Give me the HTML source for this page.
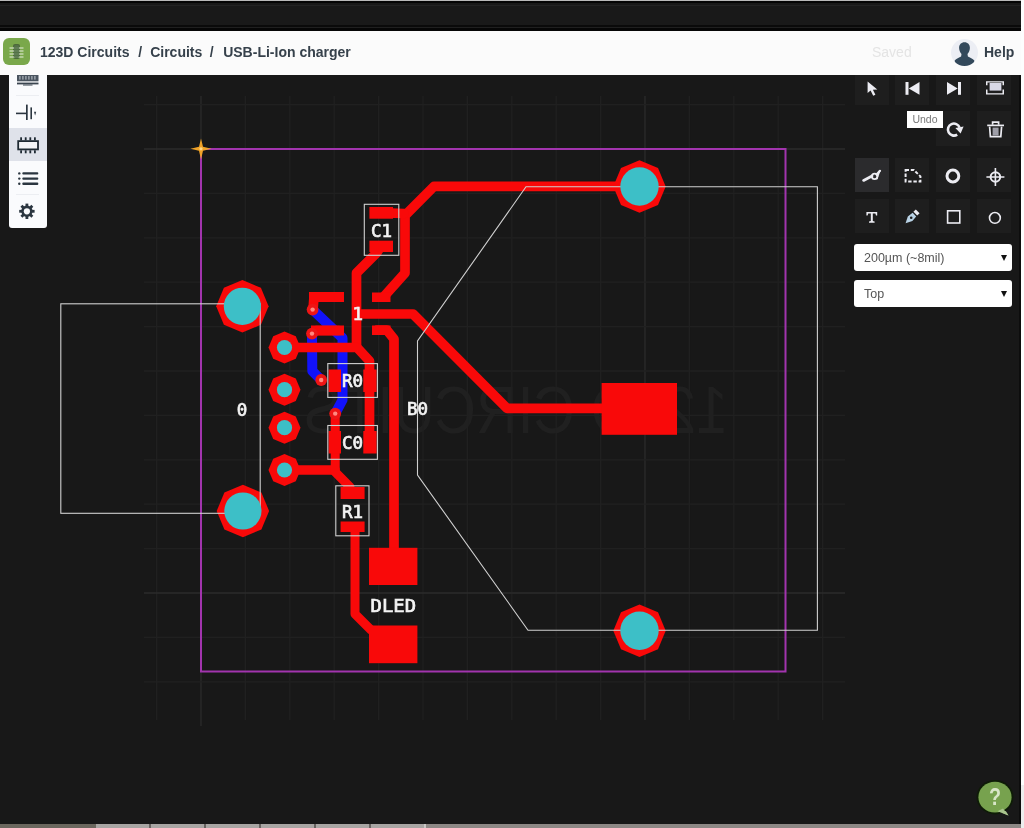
<!DOCTYPE html>
<html lang="en">
<head>
<meta charset="utf-8">
<title>123D Circuits - USB-Li-Ion charger</title>
<style>
html,body{margin:0;padding:0;}
body{width:1024px;height:828px;overflow:hidden;background:#181818;position:relative;font-family:"Liberation Sans",sans-serif;}
#stage{position:absolute;left:0;top:0;width:1024px;height:828px;overflow:hidden;background:#181818;}
#header,#tooltip,.sel2,svg{will-change:transform;}
#topline{position:absolute;left:0;top:0;width:1021px;height:1px;background:#b9b9b9;}
#topbar{position:absolute;left:0;top:1px;width:1021px;height:30px;background:#191919;}
#topbar i{position:absolute;left:0;width:100%;display:block;}
#rightstrip{position:absolute;left:1021px;top:0;width:3px;height:828px;background:#fdfdfd;}
#rightstrip i{position:absolute;left:0;top:785px;width:3px;height:43px;background:#ededed;display:block;}
#rightedge{position:absolute;left:1019px;top:75px;width:2px;height:749px;background:#0d0d0d;}
#bottomstrip{position:absolute;left:0;top:824px;width:1021px;height:4px;background:#8d8885;}
#bottomstrip i{position:absolute;top:0;height:4px;display:block;}
#header{position:absolute;left:0;top:31px;width:1021px;height:44px;background:#fbfbfb;}
#logo{position:absolute;left:3px;top:7px;width:27px;height:27px;border-radius:6px;background:#7aa84b;}
#crumbs{position:absolute;left:40px;top:13px;font-size:14px;font-weight:bold;color:#36414b;white-space:nowrap;line-height:17px;}
#crumbs span.a{margin:0 8px 0 8.8px;}#crumbs span.b{margin:0 9.6px 0 7.4px;}
#saved{position:absolute;left:872px;top:13px;font-size:14px;color:#e4e4e4;line-height:17px;}
#avatar{position:absolute;left:951px;top:8px;width:27px;height:27px;border-radius:50%;background:#eceef4;overflow:hidden;}
#help{position:absolute;left:984px;top:13px;font-size:14px;font-weight:bold;color:#36414b;line-height:17px;}
#leftpanel{position:absolute;left:9px;top:70px;width:38px;height:158px;background:#fafbfd;border-radius:0 0 3px 3px;}
#leftpanel .sel{position:absolute;left:0;top:58px;width:38px;height:33px;background:#dfe2ea;}
.tb{position:absolute;width:34px;height:34px;background:#1e1e1e;}
.tb.on{background:#2b2b2d;}
#tooltip{position:absolute;left:907px;top:111px;width:36px;height:17px;background:#fff;color:#777;font-size:10.5px;line-height:17px;text-align:center;}
.sel2{position:absolute;left:854px;width:158px;height:27px;background:#fff;border-radius:3px;color:#555;font-size:12.5px;line-height:28.5px;text-indent:10px;}
.sel2 b{position:absolute;right:5px;top:11px;width:0;height:0;border-left:3.5px solid transparent;border-right:3.5px solid transparent;border-top:6px solid #111;}
svg{position:absolute;left:0;top:0;}
</style>
</head>
<body>
<div id="stage">
<svg width="1024" height="828" viewBox="0 0 1024 828">
<g transform="translate(728,433) scale(-1,1)"><text x="0" y="0" font-family="Liberation Sans,sans-serif" font-size="66" font-weight="normal" fill="#202020" textLength="424" lengthAdjust="spacingAndGlyphs">123D CIRCUITS</text></g>
<g stroke-width="1.3" shape-rendering="auto"><line x1="156.6" y1="96" x2="156.6" y2="720" stroke="#202020"/><line x1="201.0" y1="96" x2="201.0" y2="726" stroke="#2b2b2b"/><line x1="245.4" y1="96" x2="245.4" y2="720" stroke="#202020"/><line x1="289.8" y1="96" x2="289.8" y2="720" stroke="#202020"/><line x1="334.2" y1="96" x2="334.2" y2="720" stroke="#202020"/><line x1="378.6" y1="96" x2="378.6" y2="720" stroke="#202020"/><line x1="423.0" y1="96" x2="423.0" y2="720" stroke="#202020"/><line x1="467.4" y1="96" x2="467.4" y2="720" stroke="#202020"/><line x1="511.8" y1="96" x2="511.8" y2="720" stroke="#202020"/><line x1="556.2" y1="96" x2="556.2" y2="720" stroke="#202020"/><line x1="600.6" y1="96" x2="600.6" y2="720" stroke="#202020"/><line x1="645.0" y1="96" x2="645.0" y2="720" stroke="#2b2b2b"/><line x1="689.4" y1="96" x2="689.4" y2="720" stroke="#202020"/><line x1="733.8" y1="96" x2="733.8" y2="720" stroke="#202020"/><line x1="778.2" y1="96" x2="778.2" y2="720" stroke="#202020"/><line x1="822.6" y1="96" x2="822.6" y2="720" stroke="#202020"/><line x1="144" y1="104.6" x2="845" y2="104.6" stroke="#202020"/><line x1="144" y1="149.0" x2="845" y2="149.0" stroke="#2b2b2b"/><line x1="144" y1="193.4" x2="845" y2="193.4" stroke="#202020"/><line x1="144" y1="237.8" x2="845" y2="237.8" stroke="#202020"/><line x1="144" y1="282.2" x2="845" y2="282.2" stroke="#202020"/><line x1="144" y1="326.6" x2="845" y2="326.6" stroke="#202020"/><line x1="144" y1="371.0" x2="845" y2="371.0" stroke="#202020"/><line x1="144" y1="415.4" x2="845" y2="415.4" stroke="#202020"/><line x1="144" y1="459.8" x2="845" y2="459.8" stroke="#202020"/><line x1="144" y1="504.2" x2="845" y2="504.2" stroke="#202020"/><line x1="144" y1="548.6" x2="845" y2="548.6" stroke="#202020"/><line x1="144" y1="593.0" x2="845" y2="593.0" stroke="#2b2b2b"/><line x1="144" y1="637.4" x2="845" y2="637.4" stroke="#202020"/><line x1="144" y1="681.8" x2="845" y2="681.8" stroke="#202020"/></g>
<rect x="201" y="149" width="584.5" height="522.5" fill="none" stroke="#a234ae" stroke-width="2"/>
<g fill="none" stroke="#1212fb" stroke-width="10" stroke-linecap="round" stroke-linejoin="round">
<path d="M312.6 309.6 L342.5 338 L342.5 400 L335.2 413.6"/>
<path d="M312 333.6 L312.3 371 L321.2 380"/>
</g>
<g fill="none" stroke="#f90909" stroke-width="9.7" stroke-linecap="round" stroke-linejoin="round">
<path d="M639.5 186.3 L434 186.3 L405 215.5 L405 273 L384 296.5"/>
<path d="M385 212.8 L404 213.5"/>
<path d="M381 246 L377 252.5 L356.5 273 L356.5 347.5"/>
<path d="M284.5 347.5 L357 347.5 L369.5 361 L369.5 448"/>
<path d="M358 314 L413 314 L507 408.4 L605 408.4"/>
<path d="M377 330.2 L387 330.2 L394 339 L394 552"/>
<path d="M339 297 L314 297 L313 309.6"/>
<path d="M339 330.5 L316 330.5 L312 333.6"/>
<path d="M284.5 470 L335 470"/>
<path d="M335.2 413.6 L335.2 472 L350 487" stroke-width="9"/>
<path d="M355 530 L355 614 L371 630" stroke-width="9"/>
</g>
<g fill="#f90909">
<rect x="309.0" y="292.0" width="35.0" height="10.0"/>
<rect x="311.0" y="325.5" width="33.0" height="10.0"/>
<rect x="372.0" y="292.5" width="18.5" height="9.5"/>
<rect x="372.0" y="325.5" width="18.5" height="9.5"/>
<rect x="369.4" y="207.0" width="23.6" height="11.7"/>
<rect x="369.4" y="240.7" width="23.6" height="11.3"/>
<rect x="328.6" y="369.5" width="12.4" height="22.5"/>
<rect x="363.3" y="369.5" width="13.3" height="22.5"/>
<rect x="328.6" y="431.0" width="12.4" height="22.5"/>
<rect x="363.3" y="431.0" width="13.3" height="22.5"/>
<rect x="340.6" y="487.0" width="24.0" height="12.0"/>
<rect x="340.6" y="521.5" width="24.0" height="10.5"/>
<rect x="369.0" y="547.8" width="48.4" height="37.2"/>
<rect x="369.0" y="625.5" width="48.4" height="37.7"/>
<rect x="601.6" y="383.0" width="75.4" height="51.8"/>
<polygon points="242.4,280.1 260.9,287.8 268.6,306.3 260.9,324.8 242.4,332.5 223.9,324.8 216.2,306.3 223.9,287.8"/>
<polygon points="242.9,484.8 261.4,492.5 269.1,511.0 261.4,529.5 242.9,537.2 224.4,529.5 216.7,511.0 224.4,492.5"/>
<polygon points="639.5,160.3 658.0,168.0 665.7,186.5 658.0,205.0 639.5,212.7 621.0,205.0 613.3,186.5 621.0,168.0"/>
<polygon points="639.5,604.5 658.0,612.2 665.7,630.7 658.0,649.2 639.5,656.9 621.0,649.2 613.3,630.7 621.0,612.2"/>
<polygon points="284.5,331.5 295.8,336.2 300.5,347.5 295.8,358.8 284.5,363.5 273.2,358.8 268.5,347.5 273.2,336.2"/>
<polygon points="284.5,373.7 295.8,378.4 300.5,389.7 295.8,401.0 284.5,405.7 273.2,401.0 268.5,389.7 273.2,378.4"/>
<polygon points="284.5,411.7 295.8,416.4 300.5,427.7 295.8,439.0 284.5,443.7 273.2,439.0 268.5,427.7 273.2,416.4"/>
<polygon points="284.5,454.0 295.8,458.7 300.5,470.0 295.8,481.3 284.5,486.0 273.2,481.3 268.5,470.0 273.2,458.7"/>
</g>
<circle cx="312.6" cy="309.6" r="5.9" fill="#ee1515"/><circle cx="312.6" cy="309.6" r="2.2" fill="#ff8a80"/>
<circle cx="312.0" cy="333.6" r="5.9" fill="#ee1515"/><circle cx="312.0" cy="333.6" r="2.2" fill="#ff8a80"/>
<circle cx="321.2" cy="380.0" r="5.9" fill="#ee1515"/><circle cx="321.2" cy="380.0" r="2.2" fill="#ff8a80"/>
<circle cx="335.2" cy="413.6" r="5.9" fill="#ee1515"/><circle cx="335.2" cy="413.6" r="2.2" fill="#ff8a80"/>
<g fill="none" stroke="#d0d0d0" stroke-width="1.1">
<rect x="60.8" y="303.8" width="199.4" height="209.5"/>
<path d="M526 186.8 L417.5 341 L417.5 475 L528 630.2 L817.4 630.2 L817.4 186.8 Z"/>
<rect x="364.3" y="204.3" width="34.5" height="51"/>
<rect x="327.8" y="363.6" width="49.6" height="33.8"/>
<rect x="327.8" y="425.5" width="49.6" height="33.8"/>
<rect x="335.8" y="485.8" width="33.2" height="50"/>
</g>
<circle cx="242.4" cy="306.3" r="18.6" fill="#3dbfc7"/>
<circle cx="242.9" cy="511.0" r="18.6" fill="#3dbfc7"/>
<circle cx="639.5" cy="186.5" r="19.2" fill="#3dbfc7"/>
<circle cx="639.5" cy="630.7" r="19.2" fill="#3dbfc7"/>
<circle cx="284.5" cy="347.5" r="7.6" fill="#3dbfc7"/>
<circle cx="284.5" cy="389.7" r="7.6" fill="#3dbfc7"/>
<circle cx="284.5" cy="427.7" r="7.6" fill="#3dbfc7"/>
<circle cx="284.5" cy="470.0" r="7.6" fill="#3dbfc7"/>
<g font-family="DejaVu Sans Mono,Liberation Mono,monospace" font-weight="normal" font-size="17.5" fill="#f4f4f4" stroke="#f4f4f4" stroke-width="0.7" text-anchor="middle">
<text x="381.5" y="237.0">C1</text>
<text x="352.5" y="387.0">R0</text>
<text x="352.5" y="449.0">C0</text>
<text x="352.5" y="517.5">R1</text>
<text x="417.5" y="415.0">B0</text>
<text x="242.0" y="415.5">0</text>
<text x="393.3" y="612.0" textLength="45.5" lengthAdjust="spacingAndGlyphs">DLED</text>
<text x="357.7" y="320.0">1</text>
</g>
<path d="M201 138.5 L203 146.8 L211.5 148.8 L203 150.8 L201 159.5 L199 150.8 L190.5 148.8 L199 146.8 Z" fill="#f0a328"/><circle cx="201" cy="148.8" r="1.6" fill="#ffd98a"/>
</svg>
<div id="topbar"><i style="top:0;height:2px;background:#050505"></i><i style="top:4px;height:1px;background:#232323"></i><i style="top:24px;height:2px;background:#0a0a0a"></i><i style="top:26px;height:1px;background:#1f1f1f"></i><i style="top:27px;height:3px;background:#060606"></i></div>
<div id="topline"></div>
<div id="rightstrip"><i></i></div><div id="rightedge"></div>
<div id="bottomstrip"><i style="left:0;width:96px;background:#6b675e"></i><i style="left:96px;width:329px;background:#a8a5a3"></i><i style="left:149px;width:2px;background:#66625f"></i><i style="left:204px;width:2px;background:#66625f"></i><i style="left:259px;width:2px;background:#66625f"></i><i style="left:314px;width:2px;background:#66625f"></i><i style="left:369px;width:2px;background:#66625f"></i><i style="left:424px;width:2px;background:#c9c7c5"></i></div>

<div id="leftpanel">
<div class="sel"></div>
<svg width="38" height="158" viewBox="9 70 38 158">
<g fill="#2b3640" stroke="none">
<g fill="#eceef2"><rect x="16" y="95" width="23" height="1"/><rect x="16" y="194" width="23" height="1"/></g>
<!-- breadboard -->
<rect x="17" y="75" width="21.5" height="6.3" fill="#4a545f"/><g fill="#aeb5bd"><rect x="19.3" y="76" width="1.2" height="3.6"/><rect x="22.3" y="76" width="1.2" height="3.6"/><rect x="25.3" y="76" width="1.2" height="3.6"/><rect x="28.3" y="76" width="1.2" height="3.6"/><rect x="31.3" y="76" width="1.2" height="3.6"/><rect x="34.3" y="76" width="1.2" height="3.6"/></g>
<rect x="17" y="82.6" width="21.5" height="1.8" fill="#3a454f"/>
<rect x="23" y="84.4" width="9.5" height="1.2" fill="#59636d"/>
<!-- battery -->
<rect x="16" y="112.6" width="10" height="1.6"/>
<rect x="26" y="104.6" width="1.7" height="15.4"/>
<rect x="30.4" y="107.4" width="1.6" height="11.8"/>
<path d="M34 111.8 L36.2 111.8 L35.1 115.6 Z"/>
<!-- chip -->
<rect x="18.2" y="141.1" width="19.8" height="8.3" fill="#f4f5f8" stroke="#1f2a33" stroke-width="1.8"/>
<g fill="#1f2a33"><rect x="20.2" y="137.3" width="1.8" height="3"/><rect x="24.8" y="137.3" width="1.8" height="3"/><rect x="29.4" y="137.3" width="1.8" height="3"/><rect x="34" y="137.3" width="1.8" height="3"/>
<rect x="20.2" y="150.3" width="1.8" height="3"/><rect x="24.8" y="150.3" width="1.8" height="3"/><rect x="29.4" y="150.3" width="1.8" height="3"/><rect x="34" y="150.3" width="1.8" height="3"/></g>
<!-- list -->
<rect x="22.3" y="172.2" width="16" height="2.4" rx="1"/><rect x="22.3" y="177.4" width="16" height="2.4" rx="1"/><rect x="22.3" y="182.5" width="16" height="2.4" rx="1"/>
<circle cx="19.3" cy="173.4" r="1.2"/><circle cx="19.3" cy="178.6" r="1.2"/><circle cx="19.3" cy="183.7" r="1.2"/>
</g>
<!-- gear -->
<g transform="translate(26.9 211.3)" fill="#2b3640">
<circle r="4.4" fill="none" stroke="#2b3640" stroke-width="2.6"/>
<g><rect x="-1.4" y="-7.7" width="2.8" height="15.4"/><rect x="-1.4" y="-7.7" width="2.8" height="15.4" transform="rotate(45)"/><rect x="-1.4" y="-7.7" width="2.8" height="15.4" transform="rotate(90)"/><rect x="-1.4" y="-7.7" width="2.8" height="15.4" transform="rotate(135)"/></g>
<circle r="3.1" fill="#fafbfd"/>
</g>
</svg>
</div>

<div id="header">
<div id="logo"><svg width="27" height="27" viewBox="0 0 27 27"><rect x="10" y="6" width="7" height="15" rx="2" fill="#4d6a3a"/><g stroke="#dfe9d3" stroke-width="1.1"><line x1="6.5" y1="10" x2="20.5" y2="10"/><line x1="6.5" y1="13" x2="20.5" y2="13"/><line x1="6.5" y1="16" x2="20.5" y2="16"/><line x1="6.5" y1="19" x2="20.5" y2="19"/></g><rect x="11" y="7" width="5" height="13" rx="1.5" fill="#56744a" opacity="0.85"/></svg></div>
<div id="crumbs">123D Circuits<span class="a">/</span>Circuits<span class="b">/</span>USB-Li-Ion charger</div>
<div id="saved">Saved</div>
<div id="avatar"><svg width="27" height="27" viewBox="0 0 27 27"><path d="M13.5 3.2c-3.300000000000001 0-5.4 2.4-5.4 5.6 0 2.6 1 4.800000000000001 2.4 6.2l-.4 2.600000000000001c-1.8 1.2-5 1.9-6.400000000000001 4l0 5.4 19.6 0 0-5.4c-1.4-2.1-4.6-2.8-6.400000000000001-4l-.4-2.600000000000001c1.4-1.4 2.4-3.6 2.4-6.2 0-3.2-2.1-5.6-5.4-5.6z" fill="#33495b"/></svg></div>
<div id="help">Help</div>
</div>

<!-- right toolbar -->
<div class="tb" style="left:855px;top:75px;height:29.5px"></div><div class="tb" style="left:895px;top:75px;height:29.5px"></div><div class="tb" style="left:936px;top:75px;height:29.5px"></div><div class="tb" style="left:977px;top:75px;height:29.5px"></div>
<div class="tb" style="left:936px;top:111px;height:35px"></div><div class="tb" style="left:977px;top:111px;height:35px"></div>
<div class="tb on" style="left:855px;top:158px"></div><div class="tb" style="left:895px;top:158px"></div><div class="tb" style="left:936px;top:158px"></div><div class="tb" style="left:977px;top:158px"></div>
<div class="tb" style="left:855px;top:199px"></div><div class="tb" style="left:895px;top:199px"></div><div class="tb" style="left:936px;top:199px"></div><div class="tb" style="left:977px;top:199px"></div>
<svg width="1024" height="828" viewBox="0 0 1024 828" style="pointer-events:none">
<g fill="#ececf2" stroke="none">
<!-- cursor -->
<path d="M867.6 81.6 L867.6 93 L870.6 90.6 L873.2 95.8 L875.4 94.8 L872.9 89.7 L877.3 89.4 Z"/>
<!-- skip back -->
<rect x="905.5" y="82" width="3" height="12.8"/><path d="M919.5 82 L919.5 94.8 L908.8 88.4 Z"/>
<!-- skip fwd -->
<rect x="958" y="82" width="3" height="12.8"/><path d="M947 82 L947 94.8 L957.7 88.4 Z"/>
<!-- fit -->
<rect x="989.6" y="83" width="11.8" height="7.6" fill="#d8d8e6"/>
<path d="M986 81.2 h18 v1.4 h-18z M986 93.2 h18 v1.4 h-18z M986 81.2 h1.5 v4 h-1.5z M1002.5 81.2 h1.5 v4 h-1.5z M986 89.5 h1.5 v5 h-1.5z M1002.5 89.5 h1.5 v5 h-1.5z"/>
</g>
<!-- redo -->
<g fill="none" stroke="#ececf2" stroke-width="2.6"><path d="M957.2 134.6 A6 6 0 1 1 959.6 127.6"/></g>
<path d="M955.4 127.9 L963.6 126.6 L960.6 133.4 Z" fill="#ececf2"/>
<!-- trash -->
<g fill="none" stroke="#ececf2" stroke-width="1.7"><path d="M989.6 126.6 L990.4 136.6 L1000.8 136.6 L1001.6 126.6"/><path d="M987.2 125.4 L1004 125.4"/><path d="M992.6 124.8 L992.6 122.2 L998.6 122.2 L998.6 124.8"/></g>
<rect x="992.6" y="127.6" width="6" height="8" fill="#9e9ea8"/>
<!-- trace tool -->
<g stroke="#ececf2" fill="none" stroke-linecap="round"><path d="M863.6 180.4 L872 176" stroke-width="2.8"/><path d="M876.6 174.6 L880 170.8" stroke-width="2.2"/><circle cx="874.6" cy="176.4" r="2.7" stroke-width="1.8"/><path d="M877 178.6 L879.6 171" stroke-width="1.5"/></g>
<!-- polygon -->
<g stroke="#ececf2" fill="none" stroke-width="2" stroke-dasharray="3.4 1.8"><path d="M905.6 170 L913.8 170 L920.4 176.4 L920.4 181.4 L905.6 181.4 Z"/></g>
<!-- via ring -->
<circle cx="952.9" cy="176" r="5.9" fill="none" stroke="#ececf2" stroke-width="3"/>
<!-- crosshair -->
<g stroke="#ececf2" fill="none"><circle cx="995.4" cy="177" r="4.8" stroke-width="2"/><path d="M986.4 177 H1004.4 M995.4 168 V186" stroke-width="1.6"/></g>
<!-- T -->
<path d="M866.4 212 H877.2 V215.4 H876 L875.4 213.6 H872.8 V221 L874.6 221.6 V222.8 H869 V221.6 L870.8 221 V213.6 H868.2 L867.6 215.4 H866.4 Z" fill="#ececf2"/>
<!-- pen -->
<g fill="#ececf2"><path d="M915.8 209.4 L919.6 213.2 L917.2 215.6 L913.4 211.8 Z"/><path d="M912.6 212.8 L916.2 216.4 L912.4 221 L905.6 223.2 L907.8 216.4 Z" fill="#b9d3e6"/></g>
<circle cx="911.2" cy="217.8" r="1.3" fill="#1f1f1f"/>
<!-- square -->
<rect x="947.6" y="210.8" width="12.2" height="12.2" fill="none" stroke="#ececf2" stroke-width="1.6"/>
<!-- circle -->
<circle cx="994.9" cy="217.9" r="5.4" fill="none" stroke="#ececf2" stroke-width="1.6"/>
</svg>
<div id="tooltip">Undo</div>
<div class="sel2" style="top:244px">200µm (~8mil)<b></b></div>
<div class="sel2" style="top:280px">Top<b></b></div>

<!-- help bubble -->
<svg width="1024" height="828" viewBox="0 0 1024 828" style="pointer-events:none">
<path d="M1004 808 L1008.5 815.5 L998 811 Z" fill="#a9c48d"/>
<ellipse cx="995" cy="797.2" rx="18.4" ry="17.2" fill="#0e1c07"/>
<ellipse cx="995" cy="797.2" rx="16.6" ry="15.4" fill="#77a24e"/>
<path d="M1003 808.5 L1008.5 815.5 L997.5 811.2 Z" fill="#a9c48d"/>
<text transform="translate(995 805.3) scale(0.84 1)" x="0" y="0" font-family="Liberation Sans,sans-serif" font-weight="bold" font-size="23.5" fill="#d8e6c8" text-anchor="middle">?</text>
</svg>

</div>
</body>
</html>
